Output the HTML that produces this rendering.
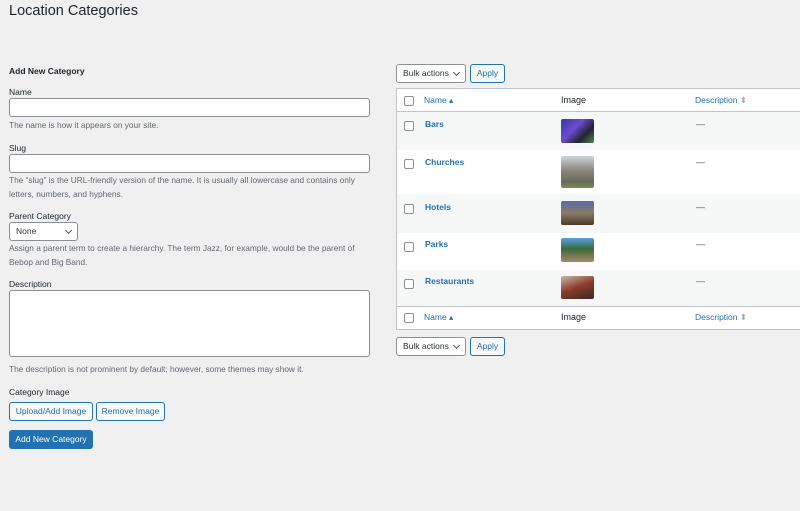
<!DOCTYPE html>
<html><head><style>
*{box-sizing:border-box}
body{margin:0;background:#f0f0f1;font-family:"Liberation Sans",sans-serif;font-size:9px;color:#3c434a;width:800px;height:511px;overflow:hidden;position:relative}
.a{position:absolute}
h1{position:absolute;left:9px;top:3px;margin:0;font-size:14.5px;font-weight:400;color:#1d2327}
.lbl{color:#1d2327;font-size:8.5px}
.in{background:#fff;border:1px solid #8c8f94;border-radius:3px}
.help{color:#646970;font-size:8.3px;line-height:15px}
.btn2{border:1px solid #2271b1;color:#2271b1;background:#f6f7f7;border-radius:3px;font-size:8.5px;text-align:center}
.sel{background:#fff;border:1px solid #8c8f94;border-radius:3px;font-size:8.5px;color:#2c3338;padding-left:6px}
.chev{position:absolute;right:6px;top:5px;width:5px;height:5px;border-right:1.3px solid #50575e;border-bottom:1.3px solid #50575e;transform:rotate(45deg)}
.cb{position:absolute;left:7px;width:10px;height:10px;border:1px solid #8c8f94;border-radius:2px;background:#fff}
.row{position:absolute;left:0;width:404px;border-top:1px solid transparent}
.nm{position:absolute;left:28px;color:#2271b1;font-weight:700;font-size:8.5px}
.img{position:absolute;left:164px;width:33px;border-radius:2px}
.dash{position:absolute;left:299px;color:#50575e}
.hd{color:#2271b1;font-size:8.5px}
</style></head><body>
<h1>Location Categories</h1>
<div class="a lbl" style="left:9px;top:66px;font-weight:700">Add New Category</div>
<div class="a lbl" style="left:9px;top:87px">Name</div>
<div class="a in" style="left:9px;top:98px;width:361px;height:19px"></div>
<div class="a help" style="left:9px;top:118px">The name is how it appears on your site.</div>
<div class="a lbl" style="left:9px;top:143px">Slug</div>
<div class="a in" style="left:9px;top:154px;width:361px;height:19px"></div>
<div class="a help" style="left:9px;top:173px;line-height:14px">The “slug” is the URL-friendly version of the name. It is usually all lowercase and contains only<br>letters, numbers, and hyphens.</div>
<div class="a lbl" style="left:9px;top:211px">Parent Category</div>
<div class="a sel" style="left:9px;top:222px;width:69px;height:19px;line-height:17px">None<span class="chev"></span></div>
<div class="a help" style="left:9px;top:241px;line-height:14px">Assign a parent term to create a hierarchy. The term Jazz, for example, would be the parent of<br>Bebop and Big Band.</div>
<div class="a lbl" style="left:9px;top:279px">Description</div>
<div class="a in" style="left:9px;top:290px;width:361px;height:67px"></div>
<div class="a help" style="left:9px;top:362px">The description is not prominent by default; however, some themes may show it.</div>
<div class="a lbl" style="left:9px;top:387px">Category Image</div>
<div class="a btn2" style="left:9px;top:402px;width:84px;height:19px;line-height:17px">Upload/Add Image</div>
<div class="a btn2" style="left:96px;top:402px;width:69px;height:19px;line-height:17px">Remove Image</div>
<div class="a" style="left:9px;top:430px;width:84px;height:19px;line-height:19px;background:#2271b1;color:#fff;border-radius:3px;text-align:center;font-size:8.5px">Add New Category</div>

<div class="a sel" style="left:396px;top:64px;width:70px;height:19px;line-height:17px">Bulk actions<span class="chev"></span></div>
<div class="a btn2" style="left:470px;top:64px;width:35px;height:19px;line-height:17px">Apply</div>
<div class="a sel" style="left:396px;top:337px;width:70px;height:19px;line-height:17px">Bulk actions<span class="chev"></span></div>
<div class="a btn2" style="left:470px;top:337px;width:35px;height:19px;line-height:17px">Apply</div>

<div class="a" style="left:396px;top:88px;width:410px;height:242px;background:#fff;border:1px solid #c3c4c7">
 <div class="row" style="top:0;height:23px;border-bottom:1px solid #c3c4c7"><span class="cb" style="top:6px"></span><span class="a hd" style="left:27px;top:5px">Name ▴</span><span class="a" style="left:164px;top:5px;color:#1d2327">Image</span><span class="a hd" style="left:298px;top:5px">Description <span style="color:#a7aaad">⬍</span></span></div>
 <div class="row" style="top:23px;height:38px;background:#f6f7f7"><span class="cb" style="top:8px"></span><span class="nm" style="top:6px">Bars</span><div class="img" style="top:6px;height:24px;background:linear-gradient(135deg,#3a3aa0,#6a4bd0 40%,#223 70%,#4a8a4a)"></div><span class="dash" style="top:6px">—</span></div>
 <div class="row" style="top:61px;height:44px;background:#fff"><span class="cb" style="top:8px"></span><span class="nm" style="top:6px">Churches</span><div class="img" style="top:5px;height:32px;background:linear-gradient(180deg,#cfd6da,#8a867c 45%,#6a6a58 80%,#7a8a5a)"></div><span class="dash" style="top:6px">—</span></div>
 <div class="row" style="top:105px;height:39px;background:#f6f7f7"><span class="cb" style="top:9px"></span><span class="nm" style="top:7px">Hotels</span><div class="img" style="top:6px;height:24px;background:linear-gradient(180deg,#5a6aa8,#8a7a6a 50%,#4a3a2a)"></div><span class="dash" style="top:7px">—</span></div>
 <div class="row" style="top:144px;height:37px;background:#fff"><span class="cb" style="top:8px"></span><span class="nm" style="top:5px">Parks</span><div class="img" style="top:4px;height:24px;background:linear-gradient(180deg,#5aa0e0,#3a6a3a 45%,#a8886a)"></div><span class="dash" style="top:5px">—</span></div>
 <div class="row" style="top:181px;height:37px;background:#f6f7f7"><span class="cb" style="top:8px"></span><span class="nm" style="top:5px">Restaurants</span><div class="img" style="top:5px;height:23px;background:linear-gradient(160deg,#c8b8a8,#8a3a2a 50%,#3a2a2a)"></div><span class="dash" style="top:5px">—</span></div>
 <div class="row" style="top:217px;height:24px;border-top:1px solid #c3c4c7"><span class="cb" style="top:6px"></span><span class="a hd" style="left:27px;top:5px">Name ▴</span><span class="a" style="left:164px;top:5px;color:#1d2327">Image</span><span class="a hd" style="left:298px;top:5px">Description <span style="color:#a7aaad">⬍</span></span></div>
</div>
</body></html>
